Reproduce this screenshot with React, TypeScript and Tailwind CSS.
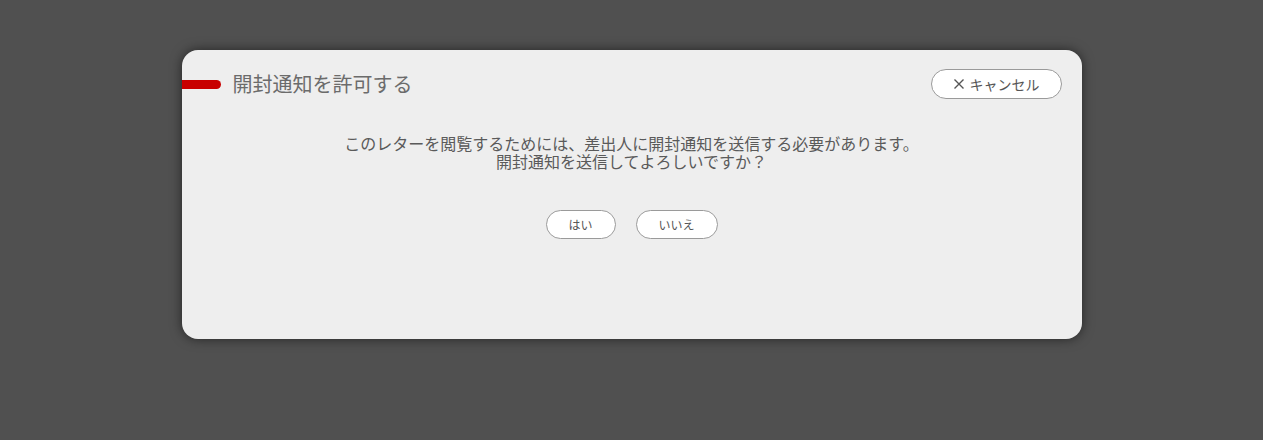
import React from "react";

export default function App() {
  return (
    <div
      className="w-full h-[440px] bg-[#505050] flex justify-center pt-[50px]"
      style={{ fontFamily: '"Noto Sans CJK JP", "Noto Sans", sans-serif' }}
    >
      <div className="w-[900px] h-[289px] bg-[#eeeeee] rounded-[16px] shadow-[0_0_12px_rgba(0,0,0,0.55)] flex flex-col overflow-hidden">
        <div className="flex items-center h-[30px] mt-[19px] pr-[20px]">
          <div className="w-[39px] h-[9px] bg-[#c80000] rounded-r-full" />
          <div className="ml-[12px] text-[20px] leading-none text-[#6b6b6b]">開封通知を許可する</div>
          <div className="flex-1" />
          <button className="w-[131px] h-[30px] rounded-full border border-[#9a9a9a] bg-white flex items-center justify-center text-[14px] text-[#555555] leading-none">
            <svg width="12" height="12" viewBox="0 0 12 12" className="mr-[5px]">
              <path d="M1.5 1.5 L10.5 10.5 M10.5 1.5 L1.5 10.5" stroke="#555" strokeWidth="1.4" fill="none" />
            </svg>
            キャンセル
          </button>
        </div>
        <div className="mt-[35px] text-center text-[16px] leading-[18px] text-[#5a5a5a]">
          <p>このレターを閲覧するためには、差出人に開封通知を送信する必要があります。</p>
          <p>開封通知を送信してよろしいですか？</p>
        </div>
        <div className="mt-[40px] flex justify-center gap-[20px]">
          <button className="w-[70px] h-[29px] rounded-full border border-[#9a9a9a] bg-white text-[12px] text-[#555555] leading-none">はい</button>
          <button className="w-[82px] h-[29px] rounded-full border border-[#9a9a9a] bg-white text-[12px] text-[#555555] leading-none">いいえ</button>
        </div>
      </div>
    </div>
  );
}
